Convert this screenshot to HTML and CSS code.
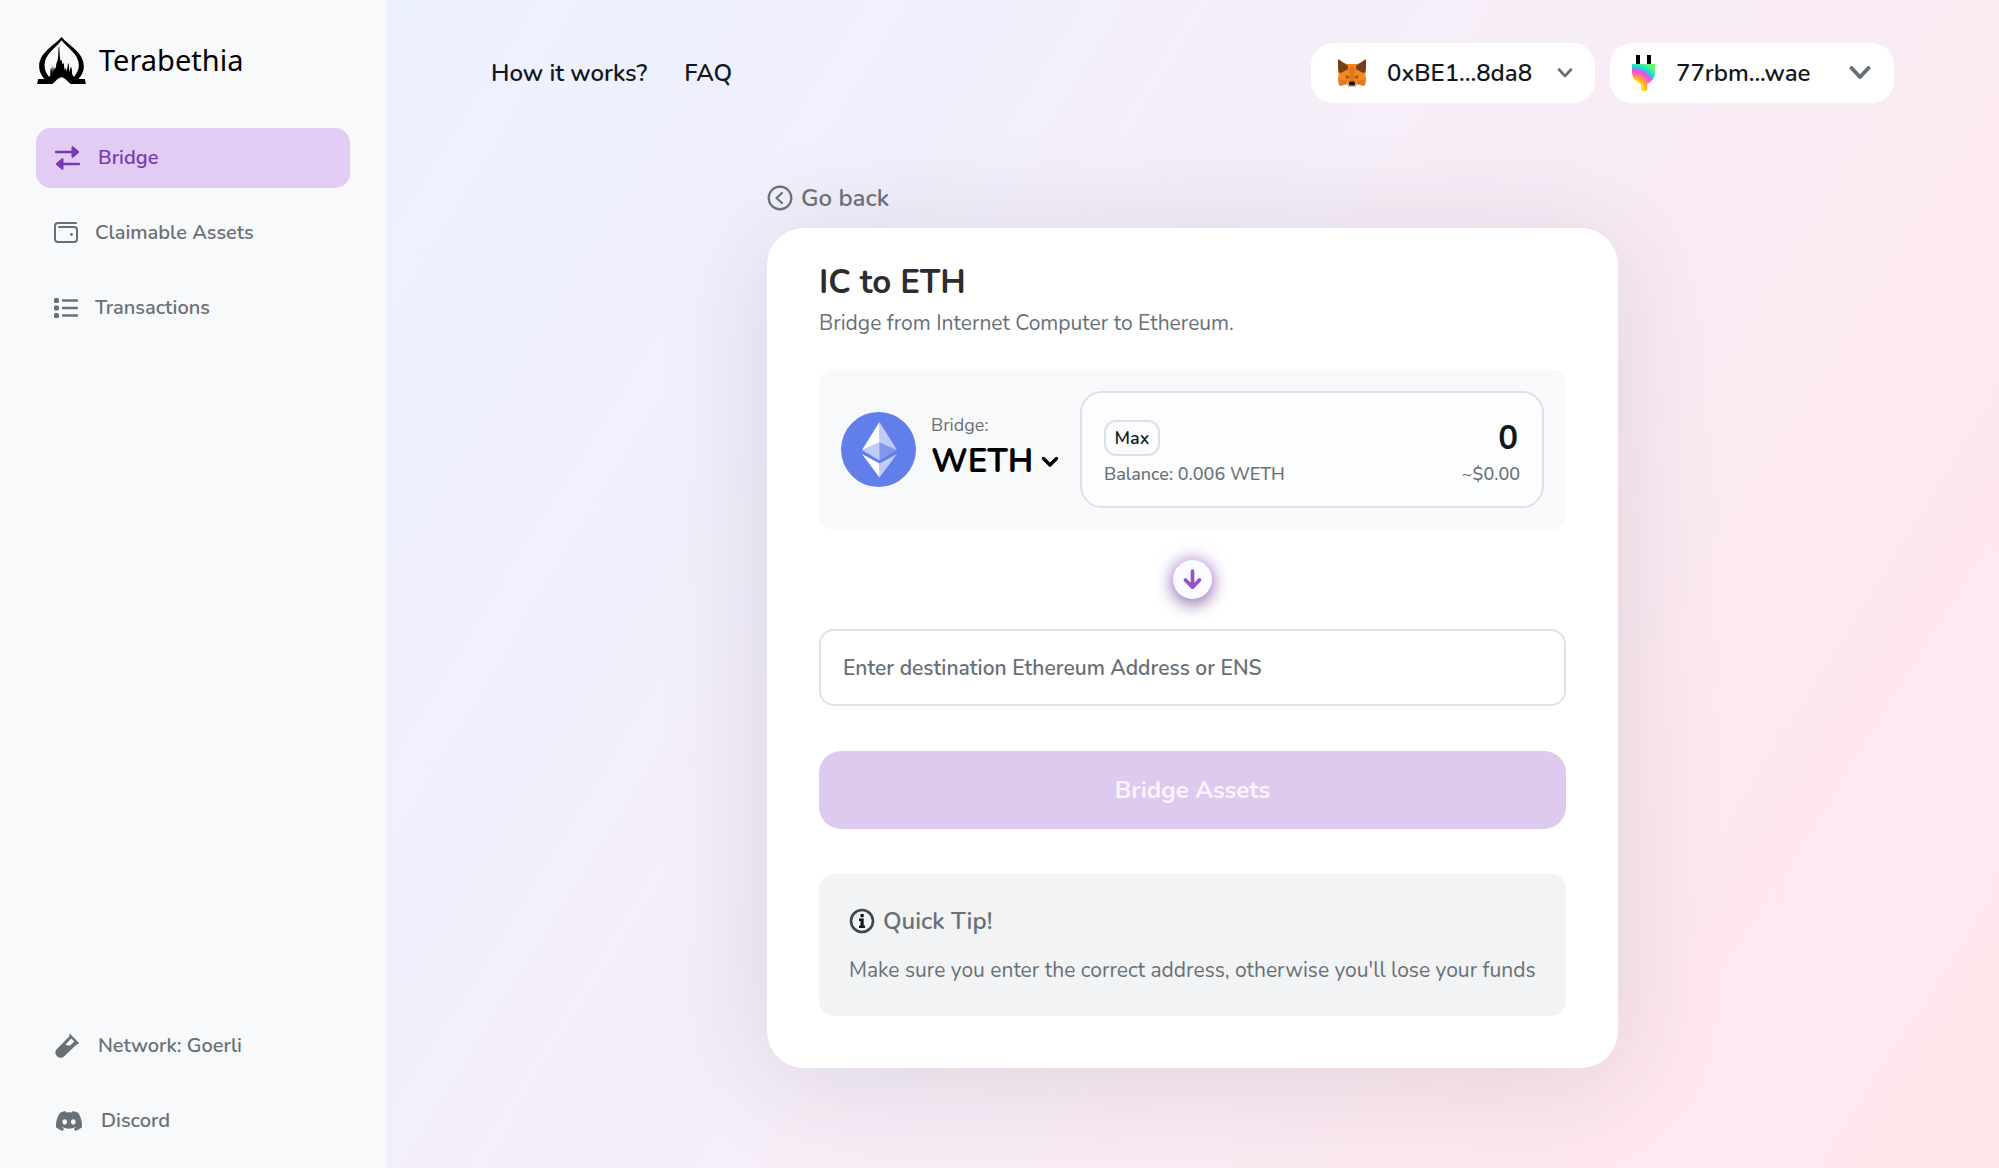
FILE: index.html
```html
<!DOCTYPE html>
<html lang="en">
<head>
  <meta charset="utf-8">
  <meta name="viewport" content="width=device-width, initial-scale=1">
  <title>Terabethia</title>
  <link rel="stylesheet" href="styles.css">
</head>
<body>
  <div class="app">
    <aside class="sidebar">
      <a class="brand" href="#">
        <svg class="brand-mark" viewBox="21 16 146 141" aria-hidden="true">
          <path fill-rule="evenodd" d="M94 16C72 42 27 62 27 104C27 121 35 133 43 142H24L21 157H66C74 152 84 138 94 137C104 138 114 152 122 157H167L164 142H145C153 133 161 121 161 104C161 62 116 42 94 16ZM94 26C76 50 43 68 43 101C43 116 49 126 56 135L60 132L61 112L64 108L66 124L68 100L71 118L74 106L76 112L79 94L82 88L84 74L85 50L87 44L89 74L91 88L94 84L97 98L101 94L103 116L107 108L110 120L113 98L115 94L118 122L122 104L125 112L126 128L131 136C139 127 146 116 146 101C146 68 113 50 94 26Z"/>
        </svg>
        <span class="brand-name">Terabethia</span>
      </a>
      <nav class="nav" aria-label="Main">
        <a class="nav-item nav-item-active" href="#">
          <svg width="27" height="24" viewBox="0 0 27 24" aria-hidden="true">
            <path d="M2 6h17M8 18h17" fill="none" stroke="currentColor" stroke-width="2.4" stroke-linecap="round"/>
            <path d="M18 1.2v9.6q0 1.2 1 .4l5.200-4.300q.9-.9 0-1.800L19 .8q-1-.8-1 .4zM9 13.200v9.600q0 1.200-1 .4L2.800 18.900q-.9-.9 0-1.800L8 12.800q1-.8 1 .4z" fill="currentColor" stroke="currentColor"/>
          </svg>
          Bridge
        </a>
        <a class="nav-item" href="#">
          <svg width="24" height="24" viewBox="0 0 24 24" fill="none" stroke="currentColor" stroke-width="2" stroke-linecap="round" aria-hidden="true">
            <path d="M22 2H4a3 3 0 0 0-3 3v13a3 3 0 0 0 3 3h16a3 3 0 0 0 3-3V9a3 3 0 0 0-3-3H5"/>
            <circle cx="17.500" cy="13.500" r="1.400" fill="currentColor" stroke="none"/>
          </svg>
          Claimable Assets
        </a>
        <a class="nav-item" href="#">
          <svg width="24" height="24" viewBox="0 0 24 24" aria-hidden="true">
            <g fill="currentColor"><rect y="2" width="5" height="5" rx="1.500"/><rect y="9.500" width="5" height="5" rx="1.500"/><rect y="17" width="5" height="5" rx="1.500"/></g>
            <path d="M9 4.500h14M9 12h14M9 19.500h14" stroke="currentColor" stroke-width="2.300" stroke-linecap="round"/>
          </svg>
          Transactions
        </a>
      </nav>
      <nav class="nav nav-bottom" aria-label="Network and community">
        <a class="nav-item" href="#">
          <svg width="27" height="24" viewBox="-1 0 27 24" aria-hidden="true">
            <path fill="currentColor" fill-rule="evenodd" d="M14.300.3q.6-.5 1.200.1l8.200 8.200q.6.600 0 1.100-.7.700-1.500.2L9 22.500Q5.500 25.200 2 22.300-1.200 18.800 1.600 15.300L14.500 2.300q-.7-1.300-.2-2zM16.300 4.600l-6 6.200q3 1.200 5 .5l4-3.800z"/>
          </svg>
          Network: Goerli
        </a>
        <a class="nav-item" href="#">
          <svg width="30" height="26" viewBox="-1 0 26 24" aria-hidden="true">
            <path fill="currentColor" d="M20.317 4.3698a19.7913 19.7913 0 00-4.8851-1.5152.0741.0741 0 00-.0785.0371c-.211.3753-.4447.8648-.6083 1.2495-1.8447-.2762-3.68-.2762-5.4868 0-.1636-.3933-.4058-.8742-.6177-1.2495a.077.077 0 00-.0785-.037 19.7363 19.7363 0 00-4.8852 1.515.0699.0699 0 00-.0321.0277C.5334 9.0458-.319 13.5799.0992 18.0578a.0824.0824 0 00.0312.0561c2.0528 1.5076 4.0413 2.4228 5.9929 3.0294a.0777.0777 0 00.0842-.0276c.4616-.6304.8731-1.2952 1.226-1.9942a.076.076 0 00-.0416-.1057c-.6528-.2476-1.2743-.5495-1.8722-.8923a.077.077 0 01-.0076-.1277c.1258-.0943.2517-.1923.3718-.2914a.0743.0743 0 01.0776-.0105c3.9278 1.7933 8.18 1.7933 12.0614 0a.0739.0739 0 01.0785.0095c.1202.099.246.1981.3728.2924a.077.077 0 01-.0066.1276 12.2986 12.2986 0 01-1.873.8914.0766.0766 0 00-.0407.1067c.3604.698.7719 1.3628 1.225 1.9932a.076.076 0 00.0842.0286c1.961-.6067 3.9495-1.5219 6.0023-3.0294a.077.077 0 00.0313-.0552c.5004-5.177-.8382-9.6739-3.5485-13.6604a.061.061 0 00-.0312-.0286zM8.02 15.3312c-1.1825 0-2.1569-1.0857-2.1569-2.419 0-1.3332.9555-2.4189 2.157-2.4189 1.2108 0 2.1757 1.0952 2.1568 2.419 0 1.3332-.9555 2.4189-2.1569 2.4189zm7.9748 0c-1.1825 0-2.1569-1.0857-2.1569-2.419 0-1.3332.9554-2.4189 2.1569-2.4189 1.2108 0 2.1757 1.0952 2.1568 2.419 0 1.3332-.946 2.4189-2.1568 2.4189Z"/>
          </svg>
          Discord
        </a>
      </nav>
    </aside>

    <div class="content">
      <header class="topbar">
        <nav class="links" aria-label="Help">
          <a href="#">How it works?</a>
          <a href="#">FAQ</a>
        </nav>
        <div class="wallets">
          <button class="wallet wallet-eth" type="button">
            <svg width="30" height="28" viewBox="0 0 30 28" aria-hidden="true">
              <path fill="#f0841e" d="M1 2l9 3h10l9-3v11l-1 3 1 4-2 6-6-1-3 3h-6l-3-3-6 1-2-6 1-4-1-3z"/>
              <path fill="#f6891f" d="M2 14l7-2 3 7-2 6-9-4zM28 14l-7-2-3 7 2 6 9-4z"/>
              <path fill="#763e1a" d="M1 1q0-1 1-.5L11 7v3l-7 4-2-1L1 9zM29 1q0-1-1-.5L19 7v3l7 4 2-1 1-4z"/>
              <path fill="#cd6116" d="M8 15l4 4-3 1zM22 15l-4 4 3 1z"/>
              <path fill="#e2761b" d="M12 8h6l-1 15h-4z"/>
              <path fill="#e27a26" d="M1 21l8 0 1 4-6 2-2-1zM29 21l-8 0-1 4 6 2 2-1z"/>
              <path fill="#d7c1b3" d="M9 25l3-1h6l3 1-3 3h-6z"/>
              <path fill="#4a4038" d="M9 16.500l3 1v2zM21 16.500l-3 1v2z"/>
              <path fill="#161616" d="M12.500 22.500h5l.8 3-.8 1h-5l-.8-1z"/>
            </svg>
            <span class="wallet-name">0xBE1...8da8</span>
            <svg width="16" height="12" viewBox="0 0 16 12" aria-hidden="true"><path class="chevron" d="M2 2.500l6 6.500 6-6.500" stroke-width="2.600"/></svg>
          </button>
          <button class="wallet" type="button">
            <svg width="24" height="38" viewBox="0 0 24 38" aria-hidden="true">
              <defs>
                <radialGradient id="plug" gradientUnits="userSpaceOnUse" cx="1" cy="37" r="34">
                  <stop offset=".3" stop-color="#ffe600"/>
                  <stop offset=".42" stop-color="#ffa040"/>
                  <stop offset=".52" stop-color="#ff6ab0"/>
                  <stop offset=".62" stop-color="#f04fdc"/>
                  <stop offset=".7" stop-color="#1fd1e6"/>
                  <stop offset=".78" stop-color="#2fe0c0"/>
                  <stop offset=".86" stop-color="#5dfa72"/>
                </radialGradient>
              </defs>
              <path d="M4 1h4v10H4zM15 1h4v10h-4z"/>
              <path fill="url(#plug)" d="M0 10h23v9q0 7-8 11v6q-3 2.500-6 0v-6Q0 26 0 19z"/>
            </svg>
            <span class="wallet-name">77rbm...wae</span>
            <svg width="24" height="16" viewBox="0 0 24 16" aria-hidden="true"><path class="chevron" d="M3.500 3l8.500 9 8.500-9" stroke-width="4"/></svg>
          </button>
        </div>
      </header>

      <main class="bridge">
        <a class="back" href="#">
          <svg width="26" height="26" viewBox="0 0 26 26" fill="none" stroke="currentColor" stroke-width="2.200" stroke-linecap="round" stroke-linejoin="round" aria-hidden="true">
            <circle cx="13" cy="13" r="11.300"/>
            <path d="M15 8l-5.500 5 5.500 5"/>
          </svg>
          Go back
        </a>
        <form class="card">
          <h1 class="card-title">IC to ETH</h1>
          <p class="card-subtitle">Bridge from Internet Computer to Ethereum.</p>

          <section class="panel">
            <div class="token">
              <svg class="token-logo" viewBox="0 0 75 75" aria-hidden="true">
                <circle cx="37.500" cy="37.500" r="37.500" fill="#627eea"/>
                <path fill="#fff" fill-opacity=".6" d="M38.500 10v20.500l17.500 7.500z"/>
                <path fill="#fff" d="M38.500 10L21 38l17.500-7.500z"/>
                <path fill="#fff" fill-opacity=".2" d="M38.500 48.500L56 38l-17.500-7.500z"/>
                <path fill="#fff" fill-opacity=".6" d="M21 38l17.500 10.500v-18z"/>
                <path fill="#fff" d="M38.500 65.500V51.500L21 42z"/>
                <path fill="#fff" fill-opacity=".6" d="M38.500 65.500V51.500L56 42z"/>
              </svg>
              <div class="token-text">
                <span class="token-label" id="token-label">Bridge:</span>
                <button class="token-select" type="button" aria-describedby="token-label">
                  WETH
                  <svg width="18" height="12" viewBox="0 0 18 12" aria-hidden="true"><path d="M2.500 2.500L9 9l6.500-6.500" fill="none" stroke="currentColor" stroke-width="3.400" stroke-linecap="round" stroke-linejoin="round"/></svg>
                </button>
              </div>
            </div>
            <div class="amount">
              <div class="amount-row">
                <button class="max" type="button">Max</button>
                <input class="amount-input" type="text" inputmode="decimal" value="0" aria-label="Amount">
              </div>
              <div class="amount-row amount-notes">
                <span>Balance: 0.006 WETH</span>
                <span>~$0.00</span>
              </div>
            </div>
          </section>

          <span class="arrow">
            <svg width="19" height="21" viewBox="0 0 19 21" aria-hidden="true">
              <path d="M9.500 2v16M2.500 11l7 7.200 7-7.200" fill="none" stroke="#9351cc" stroke-width="3.600" stroke-linecap="round" stroke-linejoin="round"/>
            </svg>
          </span>

          <input class="address" type="text" placeholder="Enter destination Ethereum Address or ENS" aria-label="Destination address">
          <button class="submit" type="submit" disabled>Bridge Assets</button>

          <section class="tip">
            <h2 class="tip-title">
              <svg width="26" height="26" viewBox="0 0 26 26" aria-hidden="true">
                <circle cx="13" cy="13" r="11" fill="none" stroke="#40474c" stroke-width="2.600"/>
                <path fill="#15191c" d="M11.500 6h3.200v3.200h-3.200zM10 10.500h4.700v7H16V20h-6v-2.500h1.500V13H10z"/>
              </svg>
              Quick Tip!
            </h2>
            <p class="tip-text">Make sure you enter the correct address, otherwise you'll lose your funds</p>
          </section>
        </form>
      </main>
    </div>
  </div>
</body>
</html>
```
FILE: styles.css
```css
*,
*::before,
*::after {
  box-sizing: border-box;
}

body {
  margin: 0;
  font-family: Nunito, Lato, "Noto Sans", sans-serif;
  font-size: 21px;
  line-height: 28px;
  color: #687076;
}

a {
  color: inherit;
  text-decoration: none;
}

button,
input {
  margin: 0;
  border: 0;
  padding: 0;
  background: none;
  font: inherit;
  color: inherit;
}

h1,
h2,
p {
  margin: 0;
}

svg {
  flex: none;
}

.app {
  display: grid;
  grid-template-columns: 386px 1fr;
  min-height: 100vh;
}

/* Sidebar */
.sidebar {
  display: flex;
  flex-direction: column;
  padding: 36px 36px 17px;
  background: #f8f9fb;
}

.brand {
  display: flex;
  align-items: center;
  gap: 12px;
  height: 48px;
  margin-bottom: 44px;
  color: #000;
}

.brand-mark {
  width: 51px;
  height: 47px;
}

.brand-name {
  font-family: "Noto Sans", "Open Sans", sans-serif;
  font-size: 29px;
  font-weight: 400;
}

.nav {
  display: flex;
  flex-direction: column;
  gap: 15px;
}

.nav-bottom {
  margin-top: auto;
}

.nav-item {
  display: flex;
  align-items: center;
  gap: 17px;
  height: 60px;
  padding: 0 18px;
  border-radius: 15px;
  font-size: 20px;
  font-weight: 600;
}

.nav-item-active {
  background: #e2ccf3;
  color: #793aaf;
}

/* Content */
.content {
  padding: 43px 105px;
  background: linear-gradient(122deg, #ecf1ff 0%, #f2effb 28%, #f7edf7 52%, #fee8ef 80%, #ffe8ec 100%);
}

.topbar {
  display: flex;
  align-items: center;
  justify-content: space-between;
  height: 60px;
  margin-bottom: 80px;
  font-size: 24px;
  font-weight: 600;
  color: #11181c;
}

.links {
  display: flex;
  gap: 37px;
}

.wallets {
  display: flex;
  gap: 15px;
}

.wallet {
  display: flex;
  align-items: center;
  width: 284px;
  height: 60px;
  padding: 0 22px;
  border-radius: 22px;
  background: #fff;
}

.wallet-eth {
  padding-left: 26px;
}

.wallet-name {
  flex: 1;
  padding-left: 20px;
  text-align: left;
}

.chevron {
  fill: none;
  stroke: #687076;
  stroke-linecap: round;
  stroke-linejoin: round;
}

.bridge {
  max-width: 851px;
  margin: 0 auto;
}

.back {
  display: inline-flex;
  align-items: center;
  gap: 8px;
  height: 30px;
  margin-bottom: 15px;
  font-size: 24px;
  font-weight: 600;
}

.card {
  display: flex;
  flex-direction: column;
  padding: 35px 52px 52px;
  border-radius: 37px;
  background: #fff;
  box-shadow: 0 10px 110px rgba(50, 40, 60, 0.13);
}

.card-title {
  font-size: 33px;
  font-weight: 700;
  line-height: 40px;
  color: #2d2d31;
}

.card-subtitle {
  margin: 6px 0 32px;
}

.panel {
  display: grid;
  grid-template-columns: 239px 1fr;
  align-items: center;
  padding: 22px;
  border-radius: 15px;
  background: #f8f9fb;
}

.token {
  display: flex;
  align-items: center;
  gap: 15px;
}

.token-logo {
  width: 75px;
  height: 75px;
}

.token-text {
  display: flex;
  flex-direction: column;
  align-items: flex-start;
}

.token-label {
  font-size: 18px;
  line-height: 24px;
}

.token-select {
  display: flex;
  align-items: center;
  gap: 8px;
  font-size: 33px;
  font-weight: 700;
  line-height: 50px;
  color: #000;
}

.amount {
  display: flex;
  flex-direction: column;
  gap: 6px;
  min-width: 0;
  height: 117px;
  padding: 27px 22px 0;
  border: 2px solid #dfe0e5;
  border-radius: 22px;
  background: #fcfdfe;
}

.amount-row {
  display: flex;
  align-items: center;
  justify-content: space-between;
}

.amount-notes {
  font-size: 18px;
  font-weight: 500;
  line-height: 24px;
}

.max {
  width: 56px;
  height: 36px;
  border: 2px solid #dfe0e5;
  border-radius: 12px;
  font-size: 18px;
  font-weight: 600;
  line-height: 24px;
  color: #11181c;
}

.amount-input {
  flex: 1;
  min-width: 0;
  height: 36px;
  padding-right: 2px;
  font-size: 33px;
  font-weight: 700;
  text-align: right;
  color: #11181c;
}

.arrow {
  display: flex;
  align-items: center;
  justify-content: center;
  align-self: center;
  width: 39px;
  height: 39px;
  margin: 30px 0;
  border-radius: 50%;
  background: #fafbfe;
  box-shadow: 0 0 18px rgba(147, 81, 204, 0.65), 0 6px 16px rgba(60, 20, 90, 0.4);
}

.address {
  height: 77px;
  padding: 0 22px;
  border: 2px solid #dfe3e6;
  border-radius: 15px;
  font-weight: 600;
}

.address::placeholder {
  color: #687076;
  opacity: 1;
}

.submit {
  height: 78px;
  margin: 45px 0;
  border-radius: 22px;
  background: #dec9ef;
  font-size: 24px;
  font-weight: 700;
  color: #f8f4fc;
}

.tip {
  display: flex;
  flex-direction: column;
  gap: 20px;
  padding: 32px 30px;
  border-radius: 15px;
  background: #f1f3f5;
}

.tip-title {
  display: flex;
  align-items: center;
  gap: 8px;
  font-size: 24px;
  font-weight: 600;
  line-height: 30px;
}
```
